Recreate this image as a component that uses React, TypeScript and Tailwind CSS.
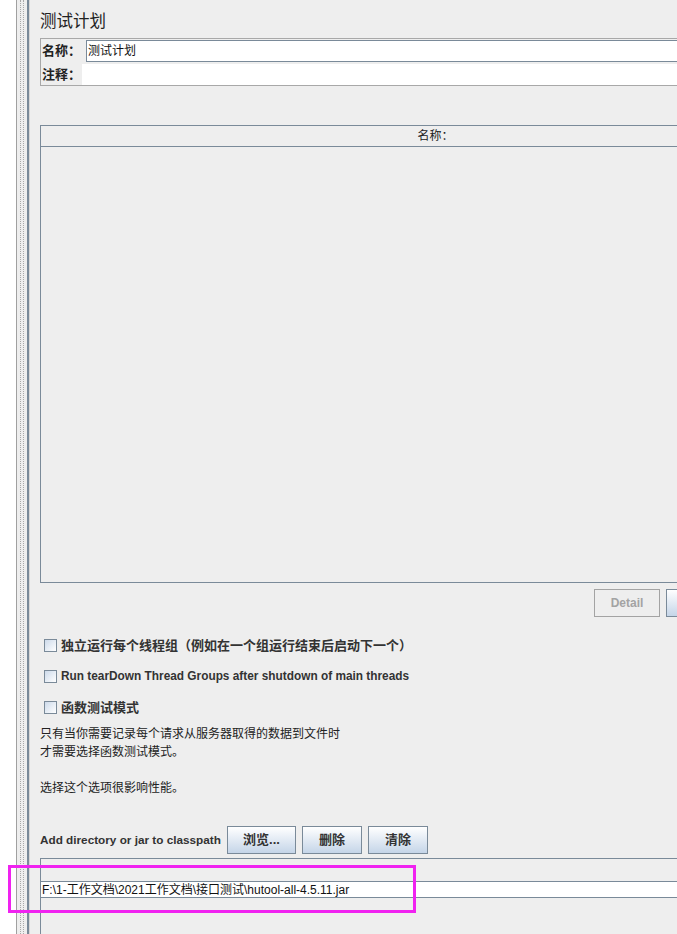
import React from 'react';

const font = "font-['Liberation_Sans','Noto_Sans_CJK_SC',sans-serif]";

const Checkbox: React.FC<{ label: string; size: string }> = ({ label, size }) => (
  <div className="flex h-[31px] items-center pl-[4px]">
    <span className="h-[13px] w-[13px] border border-[#7a8a99] bg-gradient-to-br from-[#cddaea] to-white" />
    <span className={`ml-[4px] ${size} font-bold text-[#333]`}>{label}</span>
  </div>
);

const BlueButton: React.FC<{ label?: string; width: string }> = ({ label, width }) => (
  <button
    className={`${width} flex h-[28px] shrink-0 items-center justify-center border border-[#7a8a99] bg-gradient-to-b from-white to-[#c5d5e8] text-[13px] font-bold text-[#333]`}
  >
    {label}
  </button>
);

export default function App() {
  return (
    <div className={`relative flex h-[934px] w-[677px] overflow-hidden bg-[#eeeeee] ${font}`}>
      {/* tree pane edge + split divider */}
      <div className="h-full w-[16px] shrink-0 bg-white" />
      <div className="h-full w-px shrink-0 bg-[#a0a0a0]" />
      <div className="flex h-full w-[10px] shrink-0 bg-[#eeeeee] pl-[3px]">
        <div className="h-full w-[3px] border-l border-dotted border-[#a8a8a8]" />
        <div className="h-full w-[2px] border-l border-dotted border-[#a8a8a8]" />
      </div>
      <div className="h-full w-[2px] shrink-0 bg-[#7a8a99]" />
      <div className="h-full w-px shrink-0 bg-[#d6d6d6]" />

      {/* main panel */}
      <div className="h-full flex-1 overflow-hidden pl-[10px]">
        <div className="w-[790px]">
          <div className="pt-[10px] text-[16.5px] leading-[22px] text-[#222]">测试计划</div>

          <div className="mt-[6px] border-t border-b border-l border-[#a8a8a8] pl-px">
            <div className="mt-px flex h-[22px] items-center">
              <span className="w-[44px] text-[13px] font-bold text-[#222]">名称：</span>
              <div className="flex h-[22px] flex-1 items-center border border-[#7a8a99] bg-white pl-px text-[12px] text-[#111]">
                测试计划
              </div>
            </div>
            <div className="mt-[2px] flex h-[21px] items-center">
              <span className="w-[40px] text-[13px] font-bold text-[#222]">注释：</span>
              <div className="h-[21px] flex-1 bg-white" />
            </div>
          </div>

          <div className="mt-[39px] border-t border-b border-l border-[#7a8a99]">
            <div className="flex h-[21px] items-center justify-center border-b border-[#7a8a99] text-[12px] text-[#222]">
              名称：
            </div>
            <div className="h-[435px]" />
          </div>

          <div className="mt-[6px] flex gap-[6px] pl-[554px]">
            <button className="flex h-[28px] w-[66px] shrink-0 items-center justify-center border border-[#a3a3a3] text-[12px] font-bold text-[#a3a3a3]">
              Detail
            </button>
            <BlueButton width="w-[60px]" />
          </div>

          <div className="mt-[13px]">
            <Checkbox size="text-[13px]" label="独立运行每个线程组（例如在一个组运行结束后启动下一个）" />
            <Checkbox size="text-[11.85px]" label="Run tearDown Thread Groups after shutdown of main threads" />
            <Checkbox size="text-[13px]" label="函数测试模式" />
          </div>

          <div className="mt-[2px] text-[12px] leading-[18px] text-[#222]">
            <div>只有当你需要记录每个请求从服务器取得的数据到文件时</div>
            <div>才需要选择函数测试模式。</div>
            <div className="h-[18px]" />
            <div>选择这个选项很影响性能。</div>
          </div>

          <div className="mt-[29px] flex h-[28px] items-center">
            <span className="w-[187px] shrink-0 text-[11.75px] font-bold text-[#333]">Add directory or jar to classpath</span>
            <div className="flex gap-[6px]">
              <BlueButton label="浏览..." width="w-[69px]" />
              <BlueButton label="删除" width="w-[60px]" />
              <BlueButton label="清除" width="w-[60px]" />
            </div>
          </div>

          <div className="mt-[4px] h-[200px] border-t border-l border-[#7a8a99] pt-[22px]">
            <div className="flex h-[17px] items-center border-t border-b border-[#7a8a99] bg-white pl-px text-[12px] text-[#111]">
              F:\1-工作文档\2021工作文档\接口测试\hutool-all-4.5.11.jar
            </div>
          </div>
        </div>
      </div>

      {/* annotation highlight */}
      <div className="absolute left-[8px] top-[865px] h-[48px] w-[408px] border-[3px] border-[#f022f0]" />
    </div>
  );
}
